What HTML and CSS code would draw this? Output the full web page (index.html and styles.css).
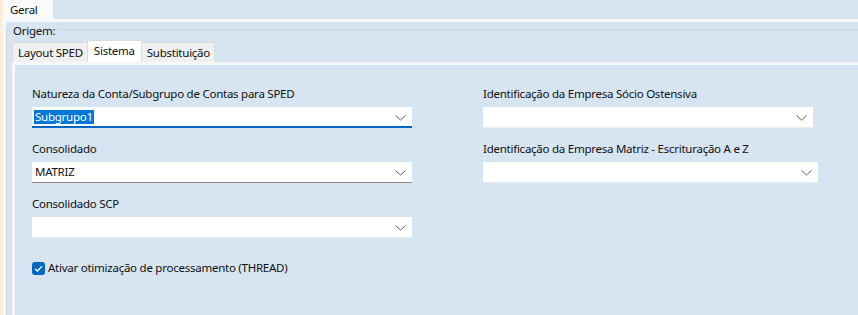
FILE: index.html
```html
<!DOCTYPE html>
<html lang="pt">
<head>
<meta charset="utf-8">
<link rel="stylesheet" href="styles.css">
</head>
<body>
<div class="window">
  <div class="tabstrip">
    <div class="tab tab-active">Geral</div>
  </div>
  <div class="page">
    <div class="group">
      <div class="group-title">Origem:</div>
      <div class="subtabs">
        <div class="subtab">Layout SPED</div>
        <div class="subtab subtab-active">Sistema</div>
        <div class="subtab">Substituição</div>
      </div>
      <div class="subpage">
        <div class="cols">
          <div class="col col-left">
            <div class="field">
              <div class="label">Natureza da Conta/Subgrupo de Contas para SPED</div>
              <div class="combo combo-focus"><span class="value selected">Subgrupo1</span><svg class="chev" width="11" height="6" viewBox="0 0 11 6"><path d="M0.5 0.5 L5.5 5 L10.5 0.5" fill="none" stroke="#5f5f5f" stroke-width="1"/></svg></div>
            </div>
            <div class="field">
              <div class="label">Consolidado</div>
              <div class="combo"><span class="value">MATRIZ</span><svg class="chev" width="11" height="6" viewBox="0 0 11 6"><path d="M0.5 0.5 L5.5 5 L10.5 0.5" fill="none" stroke="#5f5f5f" stroke-width="1"/></svg></div>
            </div>
            <div class="field">
              <div class="label">Consolidado SCP</div>
              <div class="combo combo-flat"><span class="value"></span><svg class="chev" width="11" height="6" viewBox="0 0 11 6"><path d="M0.5 0.5 L5.5 5 L10.5 0.5" fill="none" stroke="#5f5f5f" stroke-width="1"/></svg></div>
            </div>
          </div>
          <div class="col col-right">
            <div class="field">
              <div class="label">Identificação da Empresa Sócio Ostensiva</div>
              <div class="combo combo-flat w330"><span class="value"></span><svg class="chev" width="11" height="6" viewBox="0 0 11 6"><path d="M0.5 0.5 L5.5 5 L10.5 0.5" fill="none" stroke="#5f5f5f" stroke-width="1"/></svg></div>
            </div>
            <div class="field">
              <div class="label">Identificação da Empresa Matriz - Escrituração A e Z</div>
              <div class="combo combo-flat w335"><span class="value"></span><svg class="chev" width="11" height="6" viewBox="0 0 11 6"><path d="M0.5 0.5 L5.5 5 L10.5 0.5" fill="none" stroke="#5f5f5f" stroke-width="1"/></svg></div>
            </div>
          </div>
        </div>
        <label class="check">
          <span class="box"><svg width="13" height="13" viewBox="0 0 13 13"><path d="M3 6.8 L5.4 9 L10 4.2" fill="none" stroke="#ffffff" stroke-width="1.3"/></svg></span>
          <span class="check-text">Ativar otimização de processamento (THREAD)</span>
        </label>
      </div>
    </div>
  </div>
</div>
</body>
</html>
```

FILE: styles.css
```css
html, body {
  margin: 0;
  padding: 0;
}
body {
  width: 858px;
  height: 315px;
  overflow: hidden;
  background: #d7e4f2;
  font-family: "Noto Sans", "Open Sans", sans-serif;
  font-size: 11.5px;
  letter-spacing: -0.25px;
  color: #111;
}
.window {
  height: 315px;
  display: flex;
  flex-direction: column;
  border-left: 3px solid #fbeedd;
}
.tabstrip {
  height: 19px;
  display: flex;
}
.tab {
  width: 50px;
  height: 19px;
  box-sizing: border-box;
  padding-left: 7px;
  line-height: 19px;
  background: #fafafa;
}
.page {
  flex: 1;
  border-top: 3px solid #f7f8fa;
  border-left: 3px solid #f7f8fa;
  display: flex;
  flex-direction: column;
}
.group {
  flex: 1;
  margin-top: 7px;
  border-top: 1px solid #d0d4d9;
  border-left: 1px solid #d0d4d9;
  display: flex;
  flex-direction: column;
}
.group-title {
  align-self: flex-start;
  margin: -6px 0 0 2px;
  padding: 0 3px 0 4px;
  line-height: 14px;
  background: #d7e4f2;
}
.subtabs {
  display: flex;
  align-items: flex-end;
  margin-top: 2px;
  padding-left: 5px;
  height: 22px;
}
.subtab {
  height: 20px;
  box-sizing: border-box;
  padding: 0 4px 0 5px;
  line-height: 19px;
  background: #f0f0f0;
  border: 1px solid #dcdcdc;
  border-bottom: none;
}
.subtab + .subtab {
  margin-left: -1px;
}
.subtab-active {
  height: 22px;
  background: #ffffff;
  line-height: 19px;
  padding: 0 6px;
  position: relative;
  z-index: 1;
}
.subpage {
  flex: 1;
  margin-left: 5px;
  border-top: 3px solid #f7f8fa;
  border-left: 3px solid #f7f8fa;
  padding: 21px 0 0 17px;
}
.cols {
  display: flex;
}
.col-left {
  width: 380px;
}
.col-right {
  margin-left: 71px;
}
.field {
  margin-bottom: 13px;
}
.label {
  line-height: 16px;
  height: 16px;
  margin-bottom: 5px;
  white-space: nowrap;
}
.combo {
  height: 21px;
  box-sizing: border-box;
  background: #ffffff;
  border-bottom: 1px solid #8a8a8a;
  display: flex;
  align-items: center;
  justify-content: space-between;
  padding: 0 6px 0 2px;
}
.combo-focus {
  border-bottom: 2px solid #0067c0;
  padding-top: 1px;
}
.combo-flat {
  border-bottom: 1px solid #e9edf2;
}
.w330 { width: 330px; }
.w335 { width: 335px; }
.value {
  line-height: 14px;
  padding: 0 1px;
}
.selected {
  background: #0078d7;
  color: #ffffff;
}
.chev {
  display: block;
  margin-top: 1px;
}
.check {
  display: flex;
  align-items: center;
  margin-top: 9px;
  height: 16px;
}
.box {
  width: 13px;
  height: 13px;
  border-radius: 3px;
  background: #0067c0;
  display: block;
}
.box svg {
  display: block;
}
.check-text {
  margin-left: 3px;
  line-height: 16px;
}
```
